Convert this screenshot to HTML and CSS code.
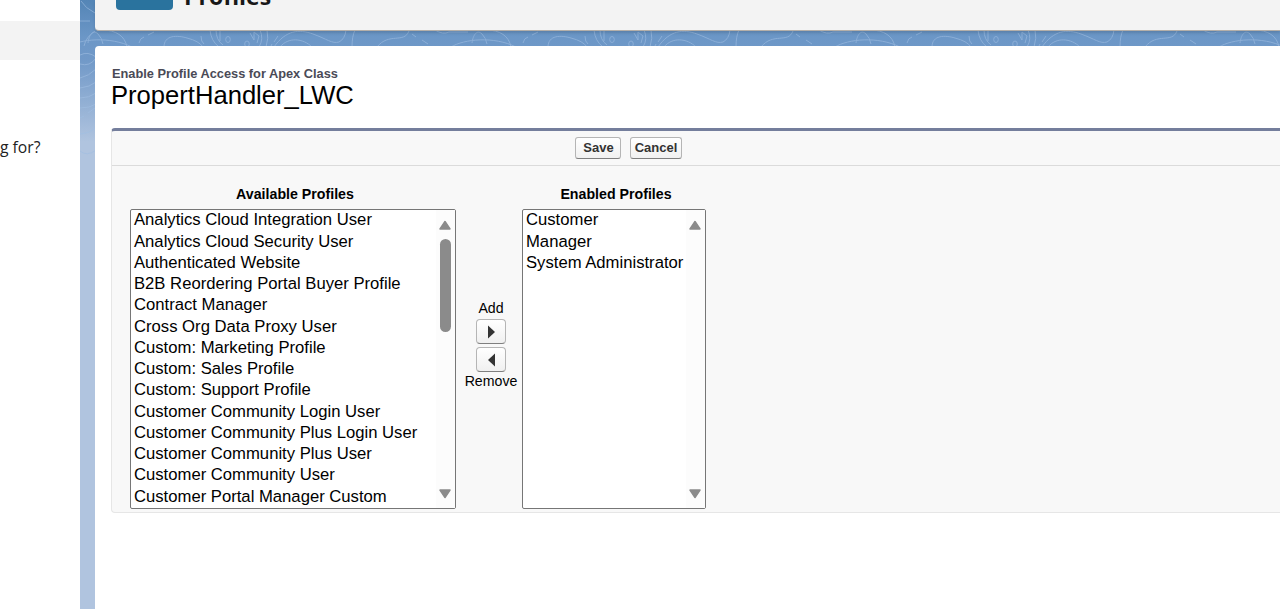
FILE: index.html
```html
<!DOCTYPE html>
<html lang="en">
<head>
<meta charset="utf-8">
<title>Profiles</title>
<link rel="stylesheet" href="styles.css">
</head>
<body>
<div class="app">
  <aside class="sidebar">
    <div class="sidebar-item"></div>
    <p class="sidebar-help">g for?</p>
  </aside>
  <main class="main">
    <svg class="topo" width="1200" height="180" viewBox="80 0 1200 180" aria-hidden="true">
      <defs>
        <g id="wave">
          <path d="M835 47C848 39 878 36 900 47M856 43C857 35 861 29 866 34Q870 38 871 44M870 30C884 30 893 36 895 47M932 47C932 35 945 35 955 38Q967 41 971 47M969 36Q969 42 972 44M978 30Q979 41 987 47M984 30Q984 40 991 45M988 31V41M1018 33L1022 40 1022 32 1027 36 1025 43M1028 30Q1032 39 1027 47M1035 30Q1037 38 1034 47M1042 47C1054 30 1067 29 1081 34S1100 44 1107 42Q1113 39 1114 30M1048 47C1056 37 1071 38 1080 47M1123 30Q1120 36 1120 47M1145 47C1157 32 1172 44 1177 31M1203 30Q1211 35 1217 32H1236"/>
          <path d="M907 43Q908 38 912 37M916 35L922 32M1046 36L1042 42M1040 44L1039 46M1180 34L1184 37M1190 40L1196 44"/>
          <ellipse cx="996" cy="39.500" rx="2.300" ry="3"/>
          <ellipse cx="1015" cy="44" rx="2.300" ry="3"/>
        </g>
      </defs>
      <use href="#wave" x="-768"/>
      <use href="#wave" x="-384"/>
      <use href="#wave"/>
      <use href="#wave" x="384"/>
      <path d="M81 1Q85 8 95 13M80 21H90M84 46Q86 37 95 31M80 55Q88 51 96 57M80 64Q90 67 96 58M80 78Q89 76 96 69M80 88Q90 87 96 82M80 98Q89 98 96 93M80 108Q90 108 96 104M80 118L84 116M88 113L95 108M80 134Q91 133 96 127M80 151Q87 157 96 150"/>
    </svg>
    <header class="page-header">
      <div class="header-icon"></div>
      <h1 class="header-title">Profiles</h1>
    </header>
    <section class="card">
      <h2 class="eyebrow">Enable Profile Access for Apex Class</h2>
      <div class="class-name">PropertHandler_LWC</div>
      <div class="panel">
        <div class="toolbar">
          <button class="btn btn-save">Save</button>
          <button class="btn btn-cancel">Cancel</button>
        </div>
        <div class="duel">
          <div class="column">
            <div class="label">Available Profiles</div>
            <div class="listbox available">
              <ul class="options">
                <li>Analytics Cloud Integration User</li>
                <li>Analytics Cloud Security User</li>
                <li>Authenticated Website</li>
                <li>B2B Reordering Portal Buyer Profile</li>
                <li>Contract Manager</li>
                <li>Cross Org Data Proxy User</li>
                <li>Custom: Marketing Profile</li>
                <li>Custom: Sales Profile</li>
                <li>Custom: Support Profile</li>
                <li>Customer Community Login User</li>
                <li>Customer Community Plus Login User</li>
                <li>Customer Community Plus User</li>
                <li>Customer Community User</li>
                <li>Customer Portal Manager Custom</li>
              </ul>
              <div class="scrollbar">
                <svg width="14" height="10" viewBox="0 0 14 10"><path class="arrow" d="M2 9L7 1.500 12 9Z"/></svg>
                <div class="thumb"></div>
                <svg class="down" width="14" height="10" viewBox="0 0 14 10"><path class="arrow" d="M2 1H12L7 8.500Z"/></svg>
              </div>
            </div>
          </div>
          <div class="transfer">
            <span>Add</span>
            <button class="arrow-btn" aria-label="Add"><svg width="8" height="14" viewBox="0 0 8 14"><path d="M1 0.500V13.500L8 7Z"/></svg></button>
            <button class="arrow-btn" aria-label="Remove"><svg width="8" height="14" viewBox="0 0 8 14"><path d="M8 0.500V13.500L1 7Z"/></svg></button>
            <span class="remove">Remove</span>
          </div>
          <div class="column">
            <div class="label label-enabled">Enabled Profiles</div>
            <div class="listbox enabled">
              <ul class="options">
                <li>Customer</li>
                <li>Manager</li>
                <li>System Administrator</li>
              </ul>
              <div class="scrollbar">
                <svg width="14" height="10" viewBox="0 0 14 10"><path class="arrow" d="M2 9L7 1.500 12 9Z"/></svg>
                <svg class="down" width="14" height="10" viewBox="0 0 14 10"><path class="arrow" d="M2 1H12L7 8.500Z"/></svg>
              </div>
            </div>
          </div>
        </div>
      </div>
    </section>
  </main>
</div>
</body>
</html>
```
FILE: styles.css
```css
* { box-sizing: border-box; }
body { margin: 0; background: #fff; font-family: "Liberation Sans", Arial, sans-serif; color: #000; overflow: hidden; }
.app { display: flex; height: 609px; width: 1280px; }
.sidebar { width: 80px; flex: none; padding-top: 21px; background: #fff; }
.sidebar-item { height: 39px; background: #f3f3f3; }
.sidebar-help { margin: 75px 0 0; font: 15.700px/24px "Open Sans", "Noto Sans", sans-serif; color: #222; white-space: nowrap; }
.main { position: relative; flex: 1; min-width: 0; display: flex; flex-direction: column; gap: 15px; padding-left: 15px; overflow: hidden; background: linear-gradient(#5485b6 0, #6c97c7 38px, #7199c8 60px, #b0c4df 142px, #b0c4df 100%); }
.topo { position: absolute; left: 0; top: 0; fill: none; stroke: #a1bfe3; stroke-width: 1; opacity: .6; }
.page-header { position: relative; height: 31px; flex: none; display: flex; gap: 11px; padding-left: 21px; background: #f3f3f3; border-bottom: 1px solid #b4afa9; border-radius: 0 0 0 4px; box-shadow: 0 2px 3px rgba(0,0,0,.13); }
.header-icon { width: 57px; height: 10px; background: #2a739e; border-radius: 0 0 4px 4px; }
.header-title { margin: -18px 0 0; font: 700 23px/28px "Open Sans", sans-serif; color: #181818; }
.card { position: relative; flex: 1; background: #fff; border-radius: 4px 0 0 0; padding: 19px 0 0 16px; }
.eyebrow { margin: 0 0 0 1px; font-size: 12.810px; line-height: 17px; color: #4a4a56; }
.class-name { font-size: 25.600px; line-height: 26px; }
.panel { margin-top: 20px; height: 385px; background: #f8f8f8; border: 1px solid #e6e6e6; border-top: 3px solid #747e9c; border-right: 0; border-radius: 4px 0 0 4px; }
.toolbar { height: 35px; border-bottom: 1px solid #dbdbdb; display: flex; gap: 9px; padding: 6px 0 0 463px; }
.btn { height: 22px; padding: 0; border: 1px solid #b5b5b5; border-bottom-color: #7f7f7f; border-radius: 3px; background: linear-gradient(#fff, #f1f1f1); font: 700 13px/18px "Liberation Sans", Arial, sans-serif; color: #333; }
.btn-save { width: 46px; padding-left: 1px; }
.btn-cancel { width: 52px; }
.duel { display: flex; padding: 19px 0 0 18px; }
.label { height: 24px; font-size: 14.200px; font-weight: 700; line-height: 18px; text-align: center; padding-left: 4px; }
.label-enabled { padding-left: 4px; }
.listbox { height: 300px; border: 1px solid #767676; border-radius: 2px; background: #fff; display: flex; justify-content: space-between; }
.available { width: 326px; }
.enabled { width: 184px; }
.options { list-style: none; margin: -0.750px 0 0; padding: 0 0 0 3px; font-size: 16.670px; line-height: 21.270px; white-space: nowrap; }
.scrollbar { width: 19px; flex: none; background: #fcfcfc; display: flex; flex-direction: column; align-items: center; padding: 10px 0 9px 0; }
.scrollbar svg { flex: none; display: block; margin-right: 0.500px; }
.thumb { width: 11px; height: 93px; margin: 9px 0 0; background: #8b8b8b; border-radius: 6px; }
.scrollbar .down { margin-top: auto; }
.arrow { fill: #8b8b8b; stroke: #8b8b8b; stroke-width: 1.500; stroke-linejoin: round; }
.transfer { width: 66px; display: flex; flex-direction: column; align-items: center; padding: 114px 0 0 4px; font-size: 14.170px; line-height: 18px; }
.arrow-btn { display: flex; align-items: center; justify-content: center; width: 30px; height: 25px; margin: 2px 0 1px; padding: 0; border: 1px solid #b5b5b5; border-bottom-color: #7f7f7f; border-radius: 4px; background: linear-gradient(#fff, #f0f0f0); }
.arrow-btn svg { fill: #333; }
.remove { margin-top: -1px; }
```
